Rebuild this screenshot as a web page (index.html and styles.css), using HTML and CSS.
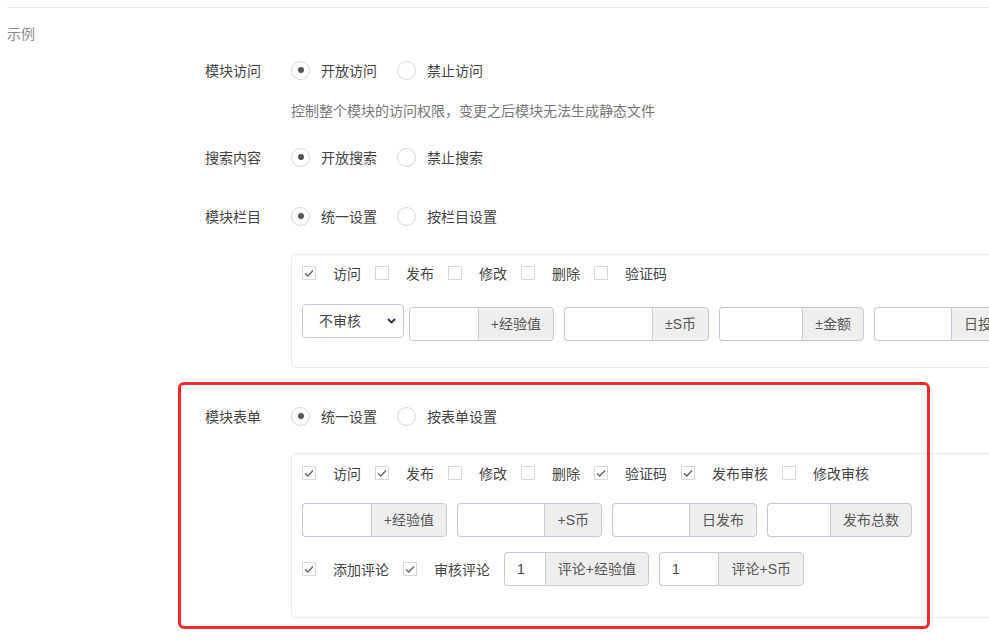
FILE: index.html
```html
<!DOCTYPE html>
<html lang="zh-CN">
<head>
    <meta charset="UTF-8">
    <meta name="viewport" content="width=device-width, initial-scale=1.0">
    <title>示例</title>
    <link rel="stylesheet" href="styles.css">
</head>
<body>
<div class="page">
    <div class="divider"></div>
    <div class="legend">示例</div>

    <div class="form-row row-first">
        <div class="label">模块访问</div>
        <div class="radios">
            <label class="radio"><span class="circle checked"></span>开放访问</label>
            <label class="radio"><span class="circle"></span>禁止访问</label>
        </div>
    </div>
    <div class="help">控制整个模块的访问权限，变更之后模块无法生成静态文件</div>

    <div class="form-row row-search">
        <div class="label">搜索内容</div>
        <div class="radios">
            <label class="radio"><span class="circle checked"></span>开放搜索</label>
            <label class="radio"><span class="circle"></span>禁止搜索</label>
        </div>
    </div>

    <div class="form-row row-cat">
        <div class="label">模块栏目</div>
        <div class="radios">
            <label class="radio"><span class="circle checked"></span>统一设置</label>
            <label class="radio"><span class="circle"></span>按栏目设置</label>
        </div>
    </div>

    <div class="box box-cat">
        <div class="checks">
            <label class="check"><span class="box-icon checked"><svg width="12" height="12" viewBox="0 0 12 12"><polyline points="2,6.5 4.8,9 10,3.5" fill="none" stroke="#666" stroke-width="1.4"/></svg></span>访问</label>
            <label class="check"><span class="box-icon"></span>发布</label>
            <label class="check"><span class="box-icon"></span>修改</label>
            <label class="check"><span class="box-icon"></span>删除</label>
            <label class="check"><span class="box-icon"></span>验证码</label>
        </div>
        <div class="inputs inputs-cat">
            <div class="select-wrap">
                <select class="select">
                    <option>不审核</option>
                    <option>审核</option>
                </select>
                <svg class="chevron" width="9" height="6" viewBox="0 0 9 6"><polyline points="1,1 4.5,4.5 8,1" fill="none" stroke="#333" stroke-width="1.8"/></svg>
            </div>
            <div class="igroup"><input type="text"><span class="addon">+经验值</span></div>
            <div class="igroup"><input type="text"><span class="addon">±S币</span></div>
            <div class="igroup"><input type="text"><span class="addon">±金额</span></div>
            <div class="igroup"><input type="text"><span class="addon">日投稿</span></div>
        </div>
    </div>

    <div class="form-row row-form">
        <div class="label">模块表单</div>
        <div class="radios">
            <label class="radio"><span class="circle checked"></span>统一设置</label>
            <label class="radio"><span class="circle"></span>按表单设置</label>
        </div>
    </div>

    <div class="box box-form">
        <div class="checks">
            <label class="check"><span class="box-icon checked"><svg width="12" height="12" viewBox="0 0 12 12"><polyline points="2,6.5 4.8,9 10,3.5" fill="none" stroke="#666" stroke-width="1.4"/></svg></span>访问</label>
            <label class="check"><span class="box-icon checked"><svg width="12" height="12" viewBox="0 0 12 12"><polyline points="2,6.5 4.8,9 10,3.5" fill="none" stroke="#666" stroke-width="1.4"/></svg></span>发布</label>
            <label class="check"><span class="box-icon"></span>修改</label>
            <label class="check"><span class="box-icon"></span>删除</label>
            <label class="check"><span class="box-icon checked"><svg width="12" height="12" viewBox="0 0 12 12"><polyline points="2,6.5 4.8,9 10,3.5" fill="none" stroke="#666" stroke-width="1.4"/></svg></span>验证码</label>
            <label class="check"><span class="box-icon checked"><svg width="12" height="12" viewBox="0 0 12 12"><polyline points="2,6.5 4.8,9 10,3.5" fill="none" stroke="#666" stroke-width="1.4"/></svg></span>发布审核</label>
            <label class="check"><span class="box-icon"></span>修改审核</label>
        </div>
        <div class="inputs">
            <div class="igroup"><input type="text"><span class="addon">+经验值</span></div>
            <div class="igroup"><input type="text"><span class="addon">+S币</span></div>
            <div class="igroup"><input type="text"><span class="addon">日发布</span></div>
            <div class="igroup"><input type="text"><span class="addon">发布总数</span></div>
        </div>
        <div class="inputs inputs-comment">
            <label class="check"><span class="box-icon checked"><svg width="12" height="12" viewBox="0 0 12 12"><polyline points="2,6.5 4.8,9 10,3.5" fill="none" stroke="#666" stroke-width="1.4"/></svg></span>添加评论</label>
            <label class="check"><span class="box-icon checked"><svg width="12" height="12" viewBox="0 0 12 12"><polyline points="2,6.5 4.8,9 10,3.5" fill="none" stroke="#666" stroke-width="1.4"/></svg></span>审核评论</label>
            <div class="igroup"><input type="text" value="1"><span class="addon">评论+经验值</span></div>
            <div class="igroup"><input type="text" value="1"><span class="addon">评论+S币</span></div>
        </div>
    </div>

    <!-- annotation frame drawn over the form section -->
    <div class="highlight"></div>
</div>
</body>
</html>
```

FILE: styles.css
```css
body {
    margin: 0;
    font-family: "Liberation Sans", "Noto Sans CJK SC", sans-serif;
    font-size: 14px;
    color: #444;
    background-color: #fff;
    overflow: hidden;
}
.page {
    position: relative;
    padding: 7px 0 0 7px;
    height: 636px;
}
.divider {
    border-top: 1px solid #e7ecf1;
}
.legend {
    margin-top: 16px;
    line-height: 20px;
    color: #888;
}
.form-row {
    display: flex;
    align-items: center;
    height: 34px;
    margin-left: 198px;
}
.row-first {
    margin-top: 9px;
}
.row-search {
    margin-top: 19px;
}
.row-cat {
    margin-top: 25px;
}
.row-form {
    margin-top: 31px;
}
.label {
    width: 86px;
    color: #444;
}
.radios {
    display: flex;
    align-items: center;
}
.radio {
    display: flex;
    align-items: center;
    margin-right: 20px;
    color: #444;
}
.circle {
    width: 17px;
    height: 17px;
    border: 1px solid #d8d8d8;
    border-radius: 50%;
    margin-right: 11px;
    display: flex;
    align-items: center;
    justify-content: center;
}
.circle.checked::after {
    content: "";
    width: 6px;
    height: 6px;
    border-radius: 50%;
    background-color: #555;
}
.help {
    margin: 14px 0 0 284px;
    line-height: 20px;
    color: #777;
}
.box {
    margin-left: 284px;
    width: 780px;
    border: 1px solid #e7ecf1;
    border-radius: 4px;
    padding: 8px 10px 26px 10px;
}
.box-cat {
    margin-top: 21px;
}
.box-form {
    margin-top: 20px;
    padding-top: 9px;
    padding-bottom: 31px;
}
.checks {
    display: flex;
    align-items: center;
    height: 20px;
}
.check {
    display: flex;
    align-items: center;
    margin-right: 14px;
    color: #444;
    white-space: nowrap;
}
.box-icon {
    width: 14px;
    height: 14px;
    border: 1px solid #d8d8d8;
    margin-right: 17px;
    display: flex;
    align-items: center;
    justify-content: center;
    box-sizing: border-box;
}
.inputs {
    display: flex;
    align-items: center;
    margin-top: 20px;
}
.inputs-cat {
    margin-top: 21px;
    align-items: flex-start;
}
.inputs-cat .igroup {
    margin-top: 3px;
}
.inputs-comment {
    margin-top: 15px;
}
.select-wrap {
    position: relative;
    margin-right: 5px;
}
.select {
    appearance: none;
    -webkit-appearance: none;
    width: 102px;
    height: 34px;
    border: 1px solid #c2cad8;
    border-radius: 4px;
    background-color: #fff;
    padding: 0 0 0 16px;
    font-family: inherit;
    font-size: 14px;
    color: #444;
}
.chevron {
    position: absolute;
    right: 8px;
    top: 14px;
}
.igroup {
    display: flex;
    width: 145px;
    height: 34px;
    flex-shrink: 0;
    margin-right: 10px;
}
.igroup input {
    flex: 1;
    min-width: 0;
    box-sizing: border-box;
    height: 34px;
    border: 1px solid #c2cad8;
    border-right: none;
    border-radius: 4px 0 0 4px;
    padding: 0 12px;
    font-family: inherit;
    font-size: 14px;
    color: #444;
}
.addon {
    box-sizing: border-box;
    height: 34px;
    line-height: 32px;
    padding: 0 12px;
    background-color: #eee;
    border: 1px solid #c2cad8;
    border-radius: 0 4px 4px 0;
    color: #555;
    white-space: nowrap;
}
.highlight {
    position: absolute;
    left: 178px;
    top: 382px;
    width: 746px;
    height: 241px;
    border: 3px solid #f32a2a;
    border-radius: 6px;
    pointer-events: none;
}
```
